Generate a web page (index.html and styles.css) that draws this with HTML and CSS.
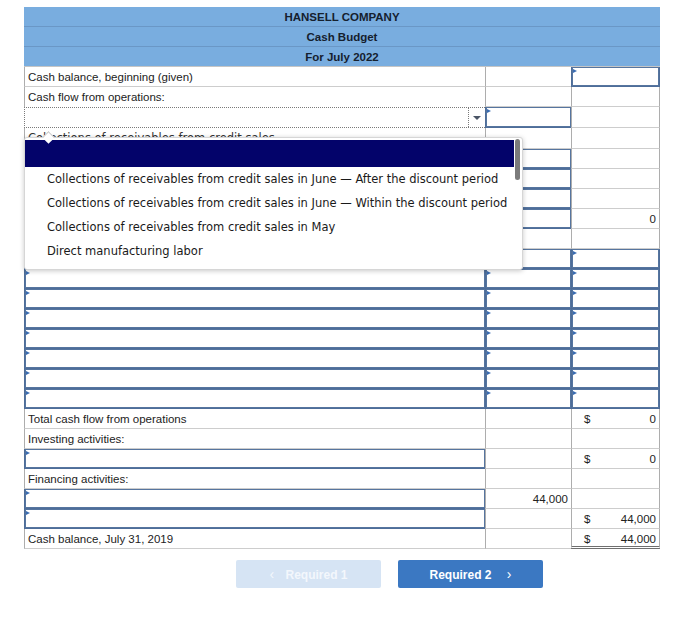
FILE: index.html
```html
<!DOCTYPE html>
<html>
<head>
<meta charset="utf-8">
<link rel="stylesheet" href="styles.css">
</head>
<body>
<div class="page">
  <div class="sheet">
    <div class="hdr">HANSELL COMPANY</div>
    <div class="hdr">Cash Budget</div>
    <div class="hdr last">For July 2022</div>

    <div class="row"><div class="c lbl">Cash balance, beginning (given)</div><div class="c"></div><div class="c in r"></div></div>
    <div class="row"><div class="c lbl nb">Cash flow from operations:</div><div class="c"></div><div class="c r"></div></div>
    <div class="row tall"><div class="c dd"><span class="dd-val"></span><span class="dd-arrow"><span class="tri"></span></span></div><div class="c in"></div><div class="c r"></div></div>
    <div class="row tall"><div class="c sel">Collections of receivables from credit sales</div><div class="c"></div><div class="c r"></div></div>
    <div class="row"><div class="c in"></div><div class="c in"></div><div class="c r"></div></div>
    <div class="row"><div class="c in"></div><div class="c in"></div><div class="c r"></div></div>
    <div class="row"><div class="c in"></div><div class="c in"></div><div class="c r"></div></div>
    <div class="row"><div class="c in"></div><div class="c in"></div><div class="c r num"><span></span><span>0</span></div></div>
    <div class="row"><div class="c"></div><div class="c"></div><div class="c r"></div></div>
    <div class="row"><div class="c in"></div><div class="c in"></div><div class="c in r"></div></div>
    <div class="row"><div class="c in"></div><div class="c in"></div><div class="c in r"></div></div>
    <div class="row"><div class="c in"></div><div class="c in"></div><div class="c in r"></div></div>
    <div class="row"><div class="c in"></div><div class="c in"></div><div class="c in r"></div></div>
    <div class="row"><div class="c in"></div><div class="c in"></div><div class="c in r"></div></div>
    <div class="row"><div class="c in"></div><div class="c in"></div><div class="c in r"></div></div>
    <div class="row"><div class="c in"></div><div class="c in"></div><div class="c in r"></div></div>
    <div class="row"><div class="c in"></div><div class="c in"></div><div class="c in r"></div></div>
    <div class="row"><div class="c lbl">Total cash flow from operations</div><div class="c"></div><div class="c r num"><span>$</span><span>0</span></div></div>
    <div class="row"><div class="c lbl">Investing activities:</div><div class="c"></div><div class="c r"></div></div>
    <div class="row"><div class="c in"></div><div class="c"></div><div class="c r num"><span>$</span><span>0</span></div></div>
    <div class="row"><div class="c lbl">Financing activities:</div><div class="c"></div><div class="c r"></div></div>
    <div class="row"><div class="c in"></div><div class="c val">44,000</div><div class="c r"></div></div>
    <div class="row"><div class="c in"></div><div class="c"></div><div class="c r num"><span>$</span><span>44,000</span></div></div>
    <div class="row"><div class="c lbl">Cash balance, July 31, 2019</div><div class="c"></div><div class="c r num dbl"><span>$</span><span>44,000</span></div></div>

    <div class="popup">
      <div class="band"></div>
      <div class="scroll"></div>
      <div class="opt">Collections of receivables from credit sales in June — After the discount period</div>
      <div class="opt">Collections of receivables from credit sales in June — Within the discount period</div>
      <div class="opt">Collections of receivables from credit sales in May</div>
      <div class="opt">Direct manufacturing labor</div>
    </div>
  </div>

  <div class="nav">
    <button class="btn prev"><span class="chev">&lsaquo;</span> Required 1</button>
    <button class="btn next">Required 2 <span class="chev">&rsaquo;</span></button>
  </div>
</div>
</body>
</html>
```

FILE: styles.css
```css
* { box-sizing: border-box; }
html, body { margin: 0; padding: 0; background: #fff; }
body {
  font-family: "Liberation Sans", Arial, sans-serif;
  font-size: 11.5px;
  color: #222;
}
.page { padding: 7px 0 0 24px; }
.sheet { position: relative; width: 636px; }

.hdr {
  height: 20px;
  line-height: 20px;
  background: #79addf;
  border-bottom: 1px solid #6a97c6;
  text-align: center;
  font-weight: bold;
  color: #15202e;
}
.hdr.last { border-bottom: 1px solid #c5c5c5; }

.row {
  display: grid;
  grid-template-columns: 461px 86px 89px;
  height: 20px;
}
.row.tall { height: 21px; }

.c {
  position: relative;
  border-left: 1px solid #adadad;
  border-bottom: 1px solid #cdcdcd;
  line-height: 20px;
  white-space: nowrap;
  overflow: hidden;
}
.c.r { border-right: 1px solid #adadad; }
.c.nb { border-bottom: 0; }
.lbl { padding-left: 3px; }

.in {
  border-left-color: #4e6d99;
  border-bottom-color: #4e6d99;
  box-shadow: inset 0 0 0 1px #56759f;
}
.in.r { border-right-color: #4e6d99; }
.in::before {
  content: "";
  position: absolute;
  left: 1px;
  top: 2px;
  border-left: 4px solid #3a6cb2;
  border-top: 2.5px solid transparent;
  border-bottom: 2.5px solid transparent;
}

.dd {
  display: flex;
  border: 1px dotted #7a7a7a;
  border-right: 0;
}
.dd-val { flex: 1; }
.dd-arrow {
  width: 17px;
  border-left: 1px dotted #7a7a7a;
  display: flex;
  align-items: center;
  justify-content: center;
}
.tri {
  width: 0; height: 0;
  border-top: 4px solid #4a5566;
  border-left: 4px solid transparent;
  border-right: 4px solid transparent;
}

.sel {
  font-family: "DejaVu Sans", Verdana, sans-serif;
  font-size: 11.5px;
  color: #333;
  padding-left: 3px;
  line-height: 21px;
}

.num {
  display: flex;
  justify-content: space-between;
  padding: 0 3px 0 12px;
}
.val { text-align: right; padding-right: 3px; }
.dbl { border-bottom: 3px double #6f6f6f; }

.popup {
  position: absolute;
  left: 0;
  top: 130px;
  width: 499px;
  height: 133px;
  background: #fff;
  border: 1px solid #d6d6d6;
  border-radius: 3px;
  box-shadow: 0 1px 5px rgba(0,0,0,0.22);
  font-family: "DejaVu Sans", Verdana, sans-serif;
  font-size: 11.5px;
  color: #1a1a1a;
}
.popup::before {
  content: "";
  position: absolute;
  left: 19px;
  top: -5px;
  width: 8px;
  height: 8px;
  background: #fff;
  border-top: 1px solid #c9c9c9;
  border-left: 1px solid #c9c9c9;
  transform: rotate(45deg);
}
.band {
  height: 27px;
  margin: 2px 8px 0 0;
  background: #03036a;
}
.scroll {
  position: absolute;
  right: 2px;
  top: 1px;
  width: 5px;
  height: 41px;
  border-radius: 3px;
  background: #7b7b7b;
}
.opt {
  height: 24px;
  line-height: 24px;
  padding-left: 22px;
  white-space: nowrap;
}

.nav {
  display: flex;
  gap: 17px;
  padding-left: 212px;
  margin-top: 11px;
}
.btn {
  width: 145px;
  height: 28px;
  border: 0;
  border-radius: 2px;
  font-family: "Liberation Sans", Arial, sans-serif;
  font-weight: bold;
  font-size: 12px;
  padding: 0;
}
.chev { font-size: 14px; font-weight: normal; }
.prev { background: #d6e4f4; color: #f3f7fc; }
.prev .chev { margin-right: 8px; }
.next { background: #3b78c2; color: #fff; }
.next .chev { margin-left: 12px; }
```
